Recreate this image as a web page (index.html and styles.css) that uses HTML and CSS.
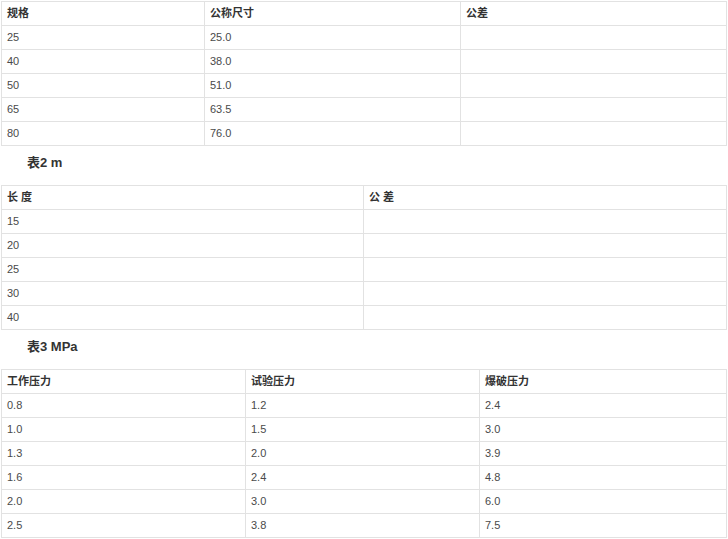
FILE: index.html
```html
<!DOCTYPE html>
<html lang="zh">
<head>
<meta charset="utf-8">
<link rel="stylesheet" href="styles.css">
</head>
<body>
<table class="grid t1">
  <colgroup><col class="c1a"><col class="c1b"><col></colgroup>
  <tr class="head"><td>规格</td><td>公称尺寸</td><td>公差</td></tr>
  <tr><td>25</td><td>25.0</td><td></td></tr>
  <tr><td>40</td><td>38.0</td><td></td></tr>
  <tr><td>50</td><td>51.0</td><td></td></tr>
  <tr><td>65</td><td>63.5</td><td></td></tr>
  <tr><td>80</td><td>76.0</td><td></td></tr>
</table>
<p class="cap">表2 m</p>
<table class="grid t2">
  <colgroup><col class="c2a"><col></colgroup>
  <tr class="head"><td>长 度</td><td>公 差</td></tr>
  <tr><td>15</td><td></td></tr>
  <tr><td>20</td><td></td></tr>
  <tr><td>25</td><td></td></tr>
  <tr><td>30</td><td></td></tr>
  <tr><td>40</td><td></td></tr>
</table>
<p class="cap">表3 MPa</p>
<table class="grid t3">
  <colgroup><col class="c3a"><col class="c3b"><col></colgroup>
  <tr class="head"><td>工作压力</td><td>试验压力</td><td>爆破压力</td></tr>
  <tr><td>0.8</td><td>1.2</td><td>2.4</td></tr>
  <tr><td>1.0</td><td>1.5</td><td>3.0</td></tr>
  <tr><td>1.3</td><td>2.0</td><td>3.9</td></tr>
  <tr><td>1.6</td><td>2.4</td><td>4.8</td></tr>
  <tr><td>2.0</td><td>3.0</td><td>6.0</td></tr>
  <tr><td>2.5</td><td>3.8</td><td>7.5</td></tr>
</table>
</body>
</html>
```
FILE: styles.css
```css
html, body {
  margin: 0;
  padding: 0;
  background: #fff;
}
body {
  padding: 1px 0 0 1px;
  font-family: "Liberation Sans", Arial, "Noto Sans CJK SC", sans-serif;
  font-size: 11px;
  color: #4a4a4a;
}
.grid {
  border-collapse: collapse;
  table-layout: fixed;
  width: 726px;
}
.grid td {
  border: 1px solid #e2e2e2;
  padding: 0 5px;
  height: 23px;
  line-height: 23px;
  white-space: nowrap;
  overflow: hidden;
}
.grid .head td {
  color: #333;
  font-weight: bold;
}
.c1a { width: 203px; }
.c1b { width: 256px; }
.c2a { width: 362px; }
.c3a { width: 244px; }
.c3b { width: 234px; }
.cap {
  margin: 0;
  height: 39px;
  line-height: 33px;
  padding-left: 26px;
  font-size: 13px;
  font-weight: bold;
  color: #333;
}
```
